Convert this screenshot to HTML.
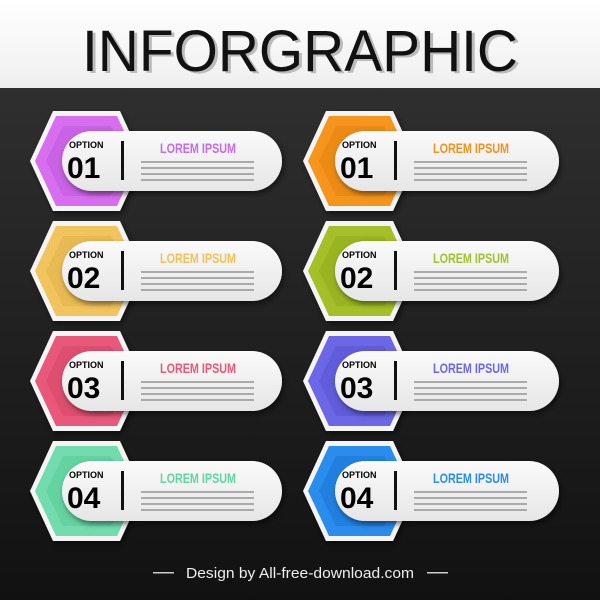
<!DOCTYPE html>
<html><head><meta charset="utf-8"><style>
html,body{margin:0;padding:0;width:600px;height:600px;overflow:hidden;background:#222}
</style></head><body>
<svg width="600" height="600" viewBox="0 0 600 600" xmlns="http://www.w3.org/2000/svg" font-family="Liberation Sans, sans-serif">
<defs>
<linearGradient id="bg" x1="0" y1="0" x2="0" y2="1"><stop offset="0" stop-color="#343434"/><stop offset="1" stop-color="#111"/></linearGradient>
<linearGradient id="hd" x1="0" y1="0" x2="0" y2="1"><stop offset="0" stop-color="#fff"/><stop offset="1" stop-color="#efefef"/></linearGradient>
<linearGradient id="pl" x1="0" y1="0" x2="0" y2="1"><stop offset="0" stop-color="#fafafa"/><stop offset="1" stop-color="#e6e6e6"/></linearGradient>
<filter id="sh" x="-20%" y="-30%" width="140%" height="160%"><feDropShadow dx="2" dy="3" stdDeviation="3" flood-color="#000" flood-opacity="0.5"/></filter>
<g id="card">
  <polygon points="-2,0 21,-50 88,-50 111,0 88,50 21,50" fill="#f4f4f4" filter="url(#sh)"/>
</g>
<g id="lines" fill="#aaa"><rect x="109" y="0" width="113" height="2"/><rect x="109" y="6" width="113" height="2"/><rect x="109" y="12" width="113" height="2"/><rect x="109" y="18" width="113" height="2"/></g>
</defs>
<rect width="600" height="600" fill="url(#bg)"/>
<rect width="600" height="88" fill="url(#hd)"/>
<text x="303" y="73" text-anchor="middle" font-size="58" fill="#bbb" textLength="436" lengthAdjust="spacingAndGlyphs">INFORGRAPHIC</text>
<text x="300" y="71" text-anchor="middle" font-size="58" fill="#111" textLength="436" lengthAdjust="spacingAndGlyphs">INFORGRAPHIC</text>

<g font-weight="bold">
<g transform="translate(32,161)">
 <use href="#card"/>
 <polygon points="3,0 24,-45 85,-45 106,0 85,45 24,45" fill="#d76ef0"/>
 <polygon points="14,0 31,-35 79,-35 96,0 79,35 31,35" fill="#b04cd0" opacity="0.35"/>
 <rect x="30" y="-30" width="220" height="60" rx="30" fill="url(#pl)" filter="url(#sh)"/>
 <text x="37" y="-13" font-size="9">OPTION</text><text x="35" y="17" font-size="30">01</text>
 <rect x="89" y="-20" width="3" height="39" fill="#111"/>
 <text x="166" y="-8" text-anchor="middle" font-size="14" fill="#c46de6" textLength="76" lengthAdjust="spacingAndGlyphs">LOREM IPSUM</text>
 <use href="#lines"/>
</g>
<g transform="translate(305,161)">
 <use href="#card"/>
 <polygon points="3,0 24,-45 85,-45 106,0 85,45 24,45" fill="#f5951c"/>
 <polygon points="14,0 31,-35 79,-35 96,0 79,35 31,35" fill="#d9770a" opacity="0.35"/>
 <rect x="30" y="-30" width="224" height="60" rx="30" fill="url(#pl)" filter="url(#sh)"/>
 <text x="37" y="-13" font-size="9">OPTION</text><text x="35" y="17" font-size="30">01</text>
 <rect x="89" y="-20" width="3" height="39" fill="#111"/>
 <text x="166" y="-8" text-anchor="middle" font-size="14" fill="#f3921c" textLength="76" lengthAdjust="spacingAndGlyphs">LOREM IPSUM</text>
 <use href="#lines"/>
</g>

<g transform="translate(32,271)">
 <use href="#card"/>
 <polygon points="3,0 24,-45 85,-45 106,0 85,45 24,45" fill="#f2c45e"/>
 <polygon points="14,0 31,-35 79,-35 96,0 79,35 31,35" fill="#d8a840" opacity="0.35"/>
 <rect x="30" y="-30" width="220" height="60" rx="30" fill="url(#pl)" filter="url(#sh)"/>
 <text x="37" y="-13" font-size="9">OPTION</text><text x="35" y="17" font-size="30">02</text>
 <rect x="89" y="-20" width="3" height="39" fill="#111"/>
 <text x="166" y="-8" text-anchor="middle" font-size="14" fill="#f0c158" textLength="76" lengthAdjust="spacingAndGlyphs">LOREM IPSUM</text>
 <use href="#lines"/>
</g>
<g transform="translate(305,271)">
 <use href="#card"/>
 <polygon points="3,0 24,-45 85,-45 106,0 85,45 24,45" fill="#a4bf28"/>
 <polygon points="14,0 31,-35 79,-35 96,0 79,35 31,35" fill="#86a012" opacity="0.35"/>
 <rect x="30" y="-30" width="224" height="60" rx="30" fill="url(#pl)" filter="url(#sh)"/>
 <text x="37" y="-13" font-size="9">OPTION</text><text x="35" y="17" font-size="30">02</text>
 <rect x="89" y="-20" width="3" height="39" fill="#111"/>
 <text x="166" y="-8" text-anchor="middle" font-size="14" fill="#a2c12a" textLength="76" lengthAdjust="spacingAndGlyphs">LOREM IPSUM</text>
 <use href="#lines"/>
</g>

<g transform="translate(32,381)">
 <use href="#card"/>
 <polygon points="3,0 24,-45 85,-45 106,0 85,45 24,45" fill="#e8587a"/>
 <polygon points="14,0 31,-35 79,-35 96,0 79,35 31,35" fill="#c83c5e" opacity="0.35"/>
 <rect x="30" y="-30" width="220" height="60" rx="30" fill="url(#pl)" filter="url(#sh)"/>
 <text x="37" y="-13" font-size="9">OPTION</text><text x="35" y="17" font-size="30">03</text>
 <rect x="89" y="-20" width="3" height="39" fill="#111"/>
 <text x="166" y="-8" text-anchor="middle" font-size="14" fill="#e8587a" textLength="76" lengthAdjust="spacingAndGlyphs">LOREM IPSUM</text>
 <use href="#lines"/>
</g>
<g transform="translate(305,381)">
 <use href="#card"/>
 <polygon points="3,0 24,-45 85,-45 106,0 85,45 24,45" fill="#6b67e6"/>
 <polygon points="14,0 31,-35 79,-35 96,0 79,35 31,35" fill="#4c48c4" opacity="0.35"/>
 <rect x="30" y="-30" width="224" height="60" rx="30" fill="url(#pl)" filter="url(#sh)"/>
 <text x="37" y="-13" font-size="9">OPTION</text><text x="35" y="17" font-size="30">03</text>
 <rect x="89" y="-20" width="3" height="39" fill="#111"/>
 <text x="166" y="-8" text-anchor="middle" font-size="14" fill="#6b67e6" textLength="76" lengthAdjust="spacingAndGlyphs">LOREM IPSUM</text>
 <use href="#lines"/>
</g>

<g transform="translate(32,491)">
 <use href="#card"/>
 <polygon points="3,0 24,-45 85,-45 106,0 85,45 24,45" fill="#72dcae"/>
 <polygon points="14,0 31,-35 79,-35 96,0 79,35 31,35" fill="#4cbf8c" opacity="0.35"/>
 <rect x="30" y="-30" width="220" height="60" rx="30" fill="url(#pl)" filter="url(#sh)"/>
 <text x="37" y="-13" font-size="9">OPTION</text><text x="35" y="17" font-size="30">04</text>
 <rect x="89" y="-20" width="3" height="39" fill="#111"/>
 <text x="166" y="-8" text-anchor="middle" font-size="14" fill="#5fd6a4" textLength="76" lengthAdjust="spacingAndGlyphs">LOREM IPSUM</text>
 <use href="#lines"/>
</g>
<g transform="translate(305,491)">
 <use href="#card"/>
 <polygon points="3,0 24,-45 85,-45 106,0 85,45 24,45" fill="#2a8cec"/>
 <polygon points="14,0 31,-35 79,-35 96,0 79,35 31,35" fill="#116ac8" opacity="0.35"/>
 <rect x="30" y="-30" width="224" height="60" rx="30" fill="url(#pl)" filter="url(#sh)"/>
 <text x="37" y="-13" font-size="9">OPTION</text><text x="35" y="17" font-size="30">04</text>
 <rect x="89" y="-20" width="3" height="39" fill="#111"/>
 <text x="166" y="-8" text-anchor="middle" font-size="14" fill="#2a8cec" textLength="76" lengthAdjust="spacingAndGlyphs">LOREM IPSUM</text>
 <use href="#lines"/>
</g>
</g>

<rect x="153" y="572" width="21" height="1.5" fill="#ccc"/>
<rect x="427" y="572" width="21" height="1.5" fill="#ccc"/>
<text x="300" y="578" text-anchor="middle" font-size="15" fill="#eee" textLength="228" lengthAdjust="spacingAndGlyphs">Design by All-free-download.com</text>
</svg>
</body></html>
